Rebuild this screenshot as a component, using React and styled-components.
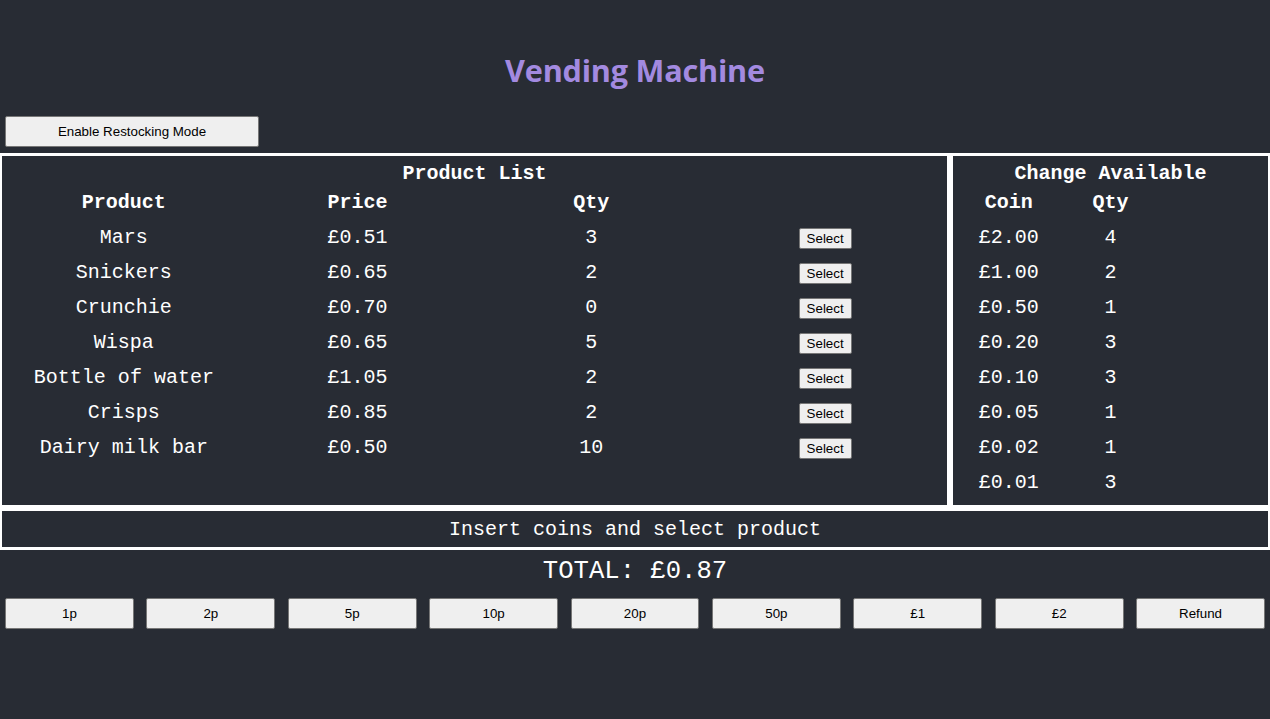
import React from "react";
import styled, { createGlobalStyle } from "styled-components";

const products = [
  { name: "Mars", price: "£0.51", qty: 3 },
  { name: "Snickers", price: "£0.65", qty: 2 },
  { name: "Crunchie", price: "£0.70", qty: 0 },
  { name: "Wispa", price: "£0.65", qty: 5 },
  { name: "Bottle of water", price: "£1.05", qty: 2 },
  { name: "Crisps", price: "£0.85", qty: 2 },
  { name: "Dairy milk bar", price: "£0.50", qty: 10 },
];

const change = [
  { coin: "£2.00", qty: 4 },
  { coin: "£1.00", qty: 2 },
  { coin: "£0.50", qty: 1 },
  { coin: "£0.20", qty: 3 },
  { coin: "£0.10", qty: 3 },
  { coin: "£0.05", qty: 1 },
  { coin: "£0.02", qty: 1 },
  { coin: "£0.01", qty: 3 },
];

const coins = ["1p", "2p", "5p", "10p", "20p", "50p", "£1", "£2", "Refund"];

function App() {
  return (
    <>
      <GlobalStyle />
      <Page>
        <Title>Vending Machine</Title>
        <RestockButton>Enable Restocking Mode</RestockButton>

        <Panels>
          <ProductPanel>
            <PanelTitle>Product List</PanelTitle>
            <Table cols={4}>
              <HeadCell>Product</HeadCell>
              <HeadCell>Price</HeadCell>
              <HeadCell>Qty</HeadCell>
              <HeadCell />
              {products.map((p) => (
                <React.Fragment key={p.name}>
                  <Cell>{p.name}</Cell>
                  <Cell>{p.price}</Cell>
                  <Cell>{p.qty}</Cell>
                  <Cell>
                    <SelectButton>Select</SelectButton>
                  </Cell>
                </React.Fragment>
              ))}
            </Table>
          </ProductPanel>

          <ChangePanel>
            <PanelTitle>Change Available</PanelTitle>
            <Table cols={3}>
              <HeadCell>Coin</HeadCell>
              <HeadCell>Qty</HeadCell>
              <HeadCell />
              {change.map((c) => (
                <React.Fragment key={c.coin}>
                  <Cell>{c.coin}</Cell>
                  <Cell>{c.qty}</Cell>
                  <Cell />
                </React.Fragment>
              ))}
            </Table>
          </ChangePanel>
        </Panels>

        <Message>Insert coins and select product</Message>
        <Total>TOTAL: £0.87</Total>

        <CoinRow>
          {coins.map((c) => (
            <CoinButton key={c}>{c}</CoinButton>
          ))}
        </CoinRow>
      </Page>
    </>
  );
}

export default App;

const GlobalStyle = createGlobalStyle`
  body {
    margin: 0;
    background-color: #282c34;
    font-family: "Liberation Mono", "Courier New", monospace;
    color: #ffffff;
  }
`;

const Page = styled.div`
  min-height: 719px;
  background-color: #282c34;
  overflow: hidden;
`;

const Title = styled.h1`
  margin: 50px 0 0;
  height: 41px;
  line-height: 40px;
  text-align: center;
  font-family: "Open Sans", sans-serif;
  font-weight: 700;
  font-size: 30.6px;
  letter-spacing: -0.2px;
  color: #a38ae0;
`;

const BaseButton = styled.button`
  font-family: "Liberation Sans", Arial, sans-serif;
  font-size: 13.333px;
  color: #000000;
  background-color: #efefef;
  border: 1px solid #767676;
  border-radius: 2px;
  cursor: pointer;
`;

const RestockButton = styled(BaseButton)`
  display: block;
  margin: 25px 0 0 5px;
  width: 254px;
  height: 31px;
`;

const Panels = styled.div`
  display: flex;
  margin-top: 6px;
`;

const Panel = styled.div`
  border: 3px solid #ffffff;
  padding: 6px 5px 5px;
`;

const ProductPanel = styled(Panel)`
  width: 950px;
  box-sizing: border-box;
  border-left-width: 2px;
`;

const ChangePanel = styled(Panel)`
  flex: 1;
  border-right-width: 2px;
`;

const PanelTitle = styled.div`
  height: 23px;
  line-height: 24px;
  text-align: center;
  font-weight: 700;
  font-size: 20px;
`;

const Table = styled.div`
  display: grid;
  grid-template-columns: repeat(${({ cols }) => cols}, 1fr);
  grid-auto-rows: 35px;
`;

const Cell = styled.div`
  display: flex;
  align-items: center;
  justify-content: center;
  font-size: 20px;
  white-space: nowrap;
`;

const HeadCell = styled(Cell)`
  font-weight: 700;
`;

const SelectButton = styled(BaseButton)`
  padding: 1px 7px;
  height: 21px;
  margin-top: 1px;
`;

const Message = styled.div`
  border: 3px solid #ffffff;
  border-left-width: 2px;
  border-right-width: 2px;
  padding-top: 2px;
  height: 34px;
  line-height: 34px;
  text-align: center;
  font-size: 20px;
`;

const Total = styled.div`
  padding-top: 4px;
  height: 36px;
  line-height: 36px;
  text-align: center;
  font-size: 25.6px;
`;

const CoinRow = styled.div`
  display: grid;
  grid-template-columns: repeat(9, 1fr);
  gap: 12.5px;
  padding: 8px 5px 0;
`;

const CoinButton = styled(BaseButton)`
  height: 31px;
`;
